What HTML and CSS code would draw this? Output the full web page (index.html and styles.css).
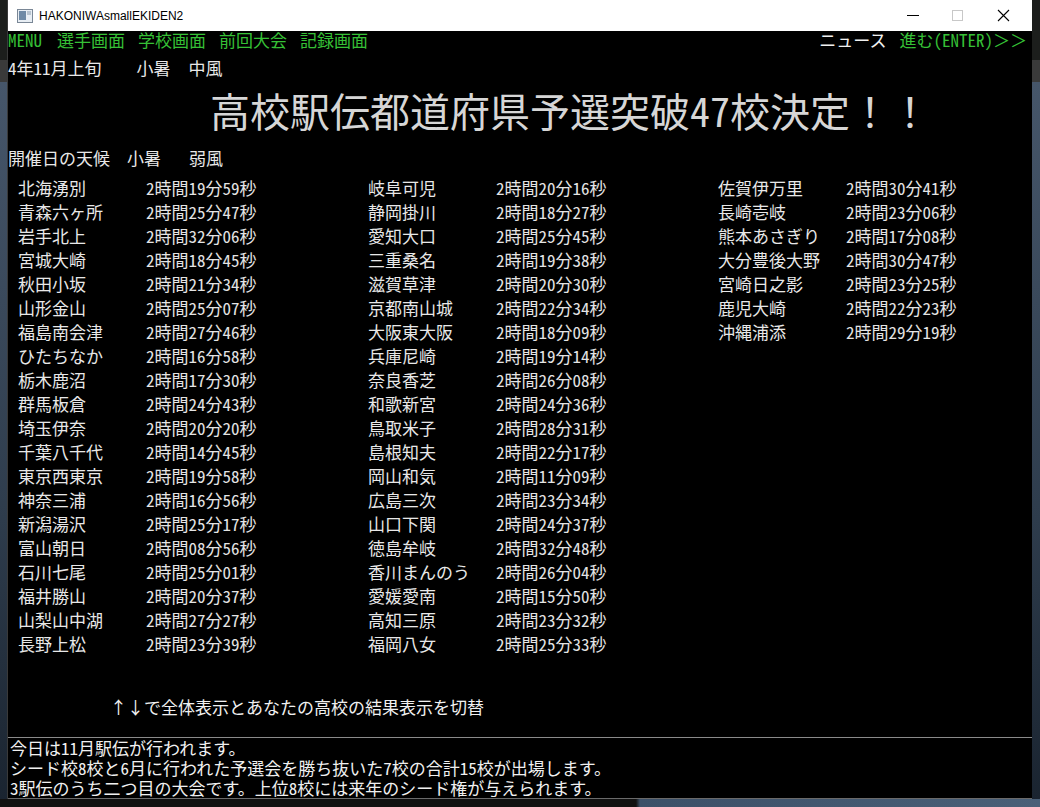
FILE: index.html
```html
<!DOCTYPE html>
<html lang="ja">
<head>
    <meta charset="UTF-8">
    <title>HAKONIWAsmallEKIDEN2</title>
    <link rel="stylesheet" href="styles.css">
</head>
<body>
    <div class="window">
        <div class="titlebar">
            <svg class="app-icon" width="16" height="14" viewBox="0 0 16 14">
                <rect x="0.5" y="0.5" width="15" height="13" fill="#e8eef4" stroke="#7a8796"/>
                <rect x="2" y="2" width="7" height="9" fill="#6f8aa6"/>
                <rect x="10" y="2" width="4" height="4" fill="#b8c4d0"/>
            </svg>
            <span class="title-text">HAKONIWAsmallEKIDEN2</span>
            <div class="controls">
                <svg width="46" height="31" viewBox="0 0 46 31"><line x1="13" y1="15.5" x2="25" y2="15.5" stroke="#000" stroke-width="1"/></svg>
                <svg width="46" height="31" viewBox="0 0 46 31"><rect x="12.5" y="10.5" width="10" height="10" fill="none" stroke="#c8c8c8"/></svg>
                <svg width="46" height="31" viewBox="0 0 46 31"><path d="M12 10 L23 21 M23 10 L12 21" stroke="#000" stroke-width="1.1"/></svg>
            </div>
        </div>

        <div class="client">
            <div class="menu-bar">
                <div class="menu-left">
                    <span class="menu-item first">MENU</span>
                    <span class="menu-item">選手画面</span>
                    <span class="menu-item">学校画面</span>
                    <span class="menu-item">前回大会</span>
                    <span class="menu-item">記録画面</span>
                </div>
                <div class="menu-right">
                    <span class="news">ニュース</span>
                    <span class="menu-item">進む(ENTER)<span class="wide">＞＞</span></span>
                </div>
            </div>

            <div class="date-row">
                <span class="date">4年11月上旬</span><span class="w1">小暑</span><span class="w2">中風</span>
            </div>

            <h1 class="headline">高校駅伝都道府県予選突破47校決定<span class="wide">！！</span></h1>

            <div class="weather-row">
                <span class="label">開催日の天候</span><span class="w1">小暑</span><span class="w2">弱風</span>
            </div>

            <div class="results">
                <div class="col">
                    <div class="row"><span class="school">北海湧別</span><span class="time">2時間19分59秒</span></div>
                    <div class="row"><span class="school">青森六ヶ所</span><span class="time">2時間25分47秒</span></div>
                    <div class="row"><span class="school">岩手北上</span><span class="time">2時間32分06秒</span></div>
                    <div class="row"><span class="school">宮城大崎</span><span class="time">2時間18分45秒</span></div>
                    <div class="row"><span class="school">秋田小坂</span><span class="time">2時間21分34秒</span></div>
                    <div class="row"><span class="school">山形金山</span><span class="time">2時間25分07秒</span></div>
                    <div class="row"><span class="school">福島南会津</span><span class="time">2時間27分46秒</span></div>
                    <div class="row"><span class="school">ひたちなか</span><span class="time">2時間16分58秒</span></div>
                    <div class="row"><span class="school">栃木鹿沼</span><span class="time">2時間17分30秒</span></div>
                    <div class="row"><span class="school">群馬板倉</span><span class="time">2時間24分43秒</span></div>
                    <div class="row"><span class="school">埼玉伊奈</span><span class="time">2時間20分20秒</span></div>
                    <div class="row"><span class="school">千葉八千代</span><span class="time">2時間14分45秒</span></div>
                    <div class="row"><span class="school">東京西東京</span><span class="time">2時間19分58秒</span></div>
                    <div class="row"><span class="school">神奈三浦</span><span class="time">2時間16分56秒</span></div>
                    <div class="row"><span class="school">新潟湯沢</span><span class="time">2時間25分17秒</span></div>
                    <div class="row"><span class="school">富山朝日</span><span class="time">2時間08分56秒</span></div>
                    <div class="row"><span class="school">石川七尾</span><span class="time">2時間25分01秒</span></div>
                    <div class="row"><span class="school">福井勝山</span><span class="time">2時間20分37秒</span></div>
                    <div class="row"><span class="school">山梨山中湖</span><span class="time">2時間27分27秒</span></div>
                    <div class="row"><span class="school">長野上松</span><span class="time">2時間23分39秒</span></div>
                </div>
                <div class="col">
                    <div class="row"><span class="school">岐阜可児</span><span class="time">2時間20分16秒</span></div>
                    <div class="row"><span class="school">静岡掛川</span><span class="time">2時間18分27秒</span></div>
                    <div class="row"><span class="school">愛知大口</span><span class="time">2時間25分45秒</span></div>
                    <div class="row"><span class="school">三重桑名</span><span class="time">2時間19分38秒</span></div>
                    <div class="row"><span class="school">滋賀草津</span><span class="time">2時間20分30秒</span></div>
                    <div class="row"><span class="school">京都南山城</span><span class="time">2時間22分34秒</span></div>
                    <div class="row"><span class="school">大阪東大阪</span><span class="time">2時間18分09秒</span></div>
                    <div class="row"><span class="school">兵庫尼崎</span><span class="time">2時間19分14秒</span></div>
                    <div class="row"><span class="school">奈良香芝</span><span class="time">2時間26分08秒</span></div>
                    <div class="row"><span class="school">和歌新宮</span><span class="time">2時間24分36秒</span></div>
                    <div class="row"><span class="school">鳥取米子</span><span class="time">2時間28分31秒</span></div>
                    <div class="row"><span class="school">島根知夫</span><span class="time">2時間22分17秒</span></div>
                    <div class="row"><span class="school">岡山和気</span><span class="time">2時間11分09秒</span></div>
                    <div class="row"><span class="school">広島三次</span><span class="time">2時間23分34秒</span></div>
                    <div class="row"><span class="school">山口下関</span><span class="time">2時間24分37秒</span></div>
                    <div class="row"><span class="school">徳島牟岐</span><span class="time">2時間32分48秒</span></div>
                    <div class="row"><span class="school">香川まんのう</span><span class="time">2時間26分04秒</span></div>
                    <div class="row"><span class="school">愛媛愛南</span><span class="time">2時間15分50秒</span></div>
                    <div class="row"><span class="school">高知三原</span><span class="time">2時間23分32秒</span></div>
                    <div class="row"><span class="school">福岡八女</span><span class="time">2時間25分33秒</span></div>
                </div>
                <div class="col">
                    <div class="row"><span class="school">佐賀伊万里</span><span class="time">2時間30分41秒</span></div>
                    <div class="row"><span class="school">長崎壱岐</span><span class="time">2時間23分06秒</span></div>
                    <div class="row"><span class="school">熊本あさぎり</span><span class="time">2時間17分08秒</span></div>
                    <div class="row"><span class="school">大分豊後大野</span><span class="time">2時間30分47秒</span></div>
                    <div class="row"><span class="school">宮崎日之影</span><span class="time">2時間23分25秒</span></div>
                    <div class="row"><span class="school">鹿児大崎</span><span class="time">2時間22分23秒</span></div>
                    <div class="row"><span class="school">沖縄浦添</span><span class="time">2時間29分19秒</span></div>
                </div>
            </div>

            <div class="hint">↑↓で全体表示とあなたの高校の結果表示を切替</div>

            <div class="message-box">
                <p>今日は11月駅伝が行われます。</p>
                <p>シード校8校と6月に行われた予選会を勝ち抜いた7校の合計15校が出場します。</p>
                <p>3駅伝のうち二つ目の大会です。上位8校には来年のシード権が与えられます。</p>
            </div>
        </div>
    </div>
    <div class="desktop-strip"></div>
</body>
</html>
```

FILE: styles.css
```css
body {
    margin: 0;
    width: 1040px;
    height: 807px;
    overflow: hidden;
    background: linear-gradient(to bottom, #1c1e1c 0, #1c1e1c 60px, #3a3a3a 60px, #3a3a3a 82px, #46566a 82px, #2e3c4c 520px, #1a2430 800px);
    font-family: "Noto Sans CJK JP", sans-serif;
    font-feature-settings: "hwid";
}

.window {
    margin-left: 7px;
    width: 1025px;
    background-color: #000;
    border-left: 1px solid #3a3a3a;
    box-sizing: border-box;
}

.titlebar {
    height: 31px;
    background-color: #fff;
    display: flex;
    align-items: center;
    font-family: "Liberation Sans", sans-serif;
    font-feature-settings: normal;
}

.app-icon {
    margin-left: 9px;
}

.title-text {
    margin-left: 6px;
    font-size: 12px;
    color: #000;
}

.controls {
    margin-left: auto;
    display: flex;
}

.client {
    height: 768px;
    color: #e8e8e8;
    font-size: 17px;
    display: flex;
    flex-direction: column;
}

.wide {
    font-feature-settings: normal;
}

.menu-bar {
    display: flex;
    justify-content: space-between;
    line-height: 17px;
    padding-right: 5px;
}

.menu-left, .menu-right {
    display: flex;
    gap: 13px;
}

.menu-item {
    color: #36c036;
}

.menu-item.first {
    margin-right: 2px;
}

.news {
    color: #f0f0f0;
}

.date-row, .weather-row {
    line-height: 20px;
    margin-top: 10px;
    white-space: nowrap;
}

.date-row .w1 {
    margin-left: 35px;
}

.date-row .w2 {
    margin-left: 18px;
}

.weather-row {
    margin-top: 14px;
}

.weather-row .w1 {
    margin-left: 17px;
}

.weather-row .w2 {
    margin-left: 28px;
}

.headline {
    margin: 8px 0 0 202px;
    font-size: 40px;
    font-weight: normal;
    line-height: 48px;
    color: #d6d6d6;
    white-space: nowrap;
}

.results {
    display: flex;
    margin-top: 8px;
    padding-left: 10px;
}

.col {
    width: 350px;
    flex-shrink: 0;
}

.col:last-child {
    width: auto;
}

.row {
    display: flex;
    height: 24px;
    line-height: 24px;
    white-space: nowrap;
}

.school {
    width: 128px;
}

.time {
    color: #e4e4e4;
}

.hint {
    margin: auto 0 0 102px;
    line-height: 20px;
    color: #f0f0f0;
}

.message-box {
    margin-top: 20px;
    border-top: 1px solid #8a8a8a;
    border-bottom: 1px solid #6a6a6a;
    padding-left: 2px;
}

.message-box p {
    margin: 0;
    line-height: 20px;
    color: #f0f0f0;
}

.desktop-strip {
    height: 8px;
    background: linear-gradient(to right, #111 0, #111 636px, #3c5068 640px, #4a6078 100%);
}
```
